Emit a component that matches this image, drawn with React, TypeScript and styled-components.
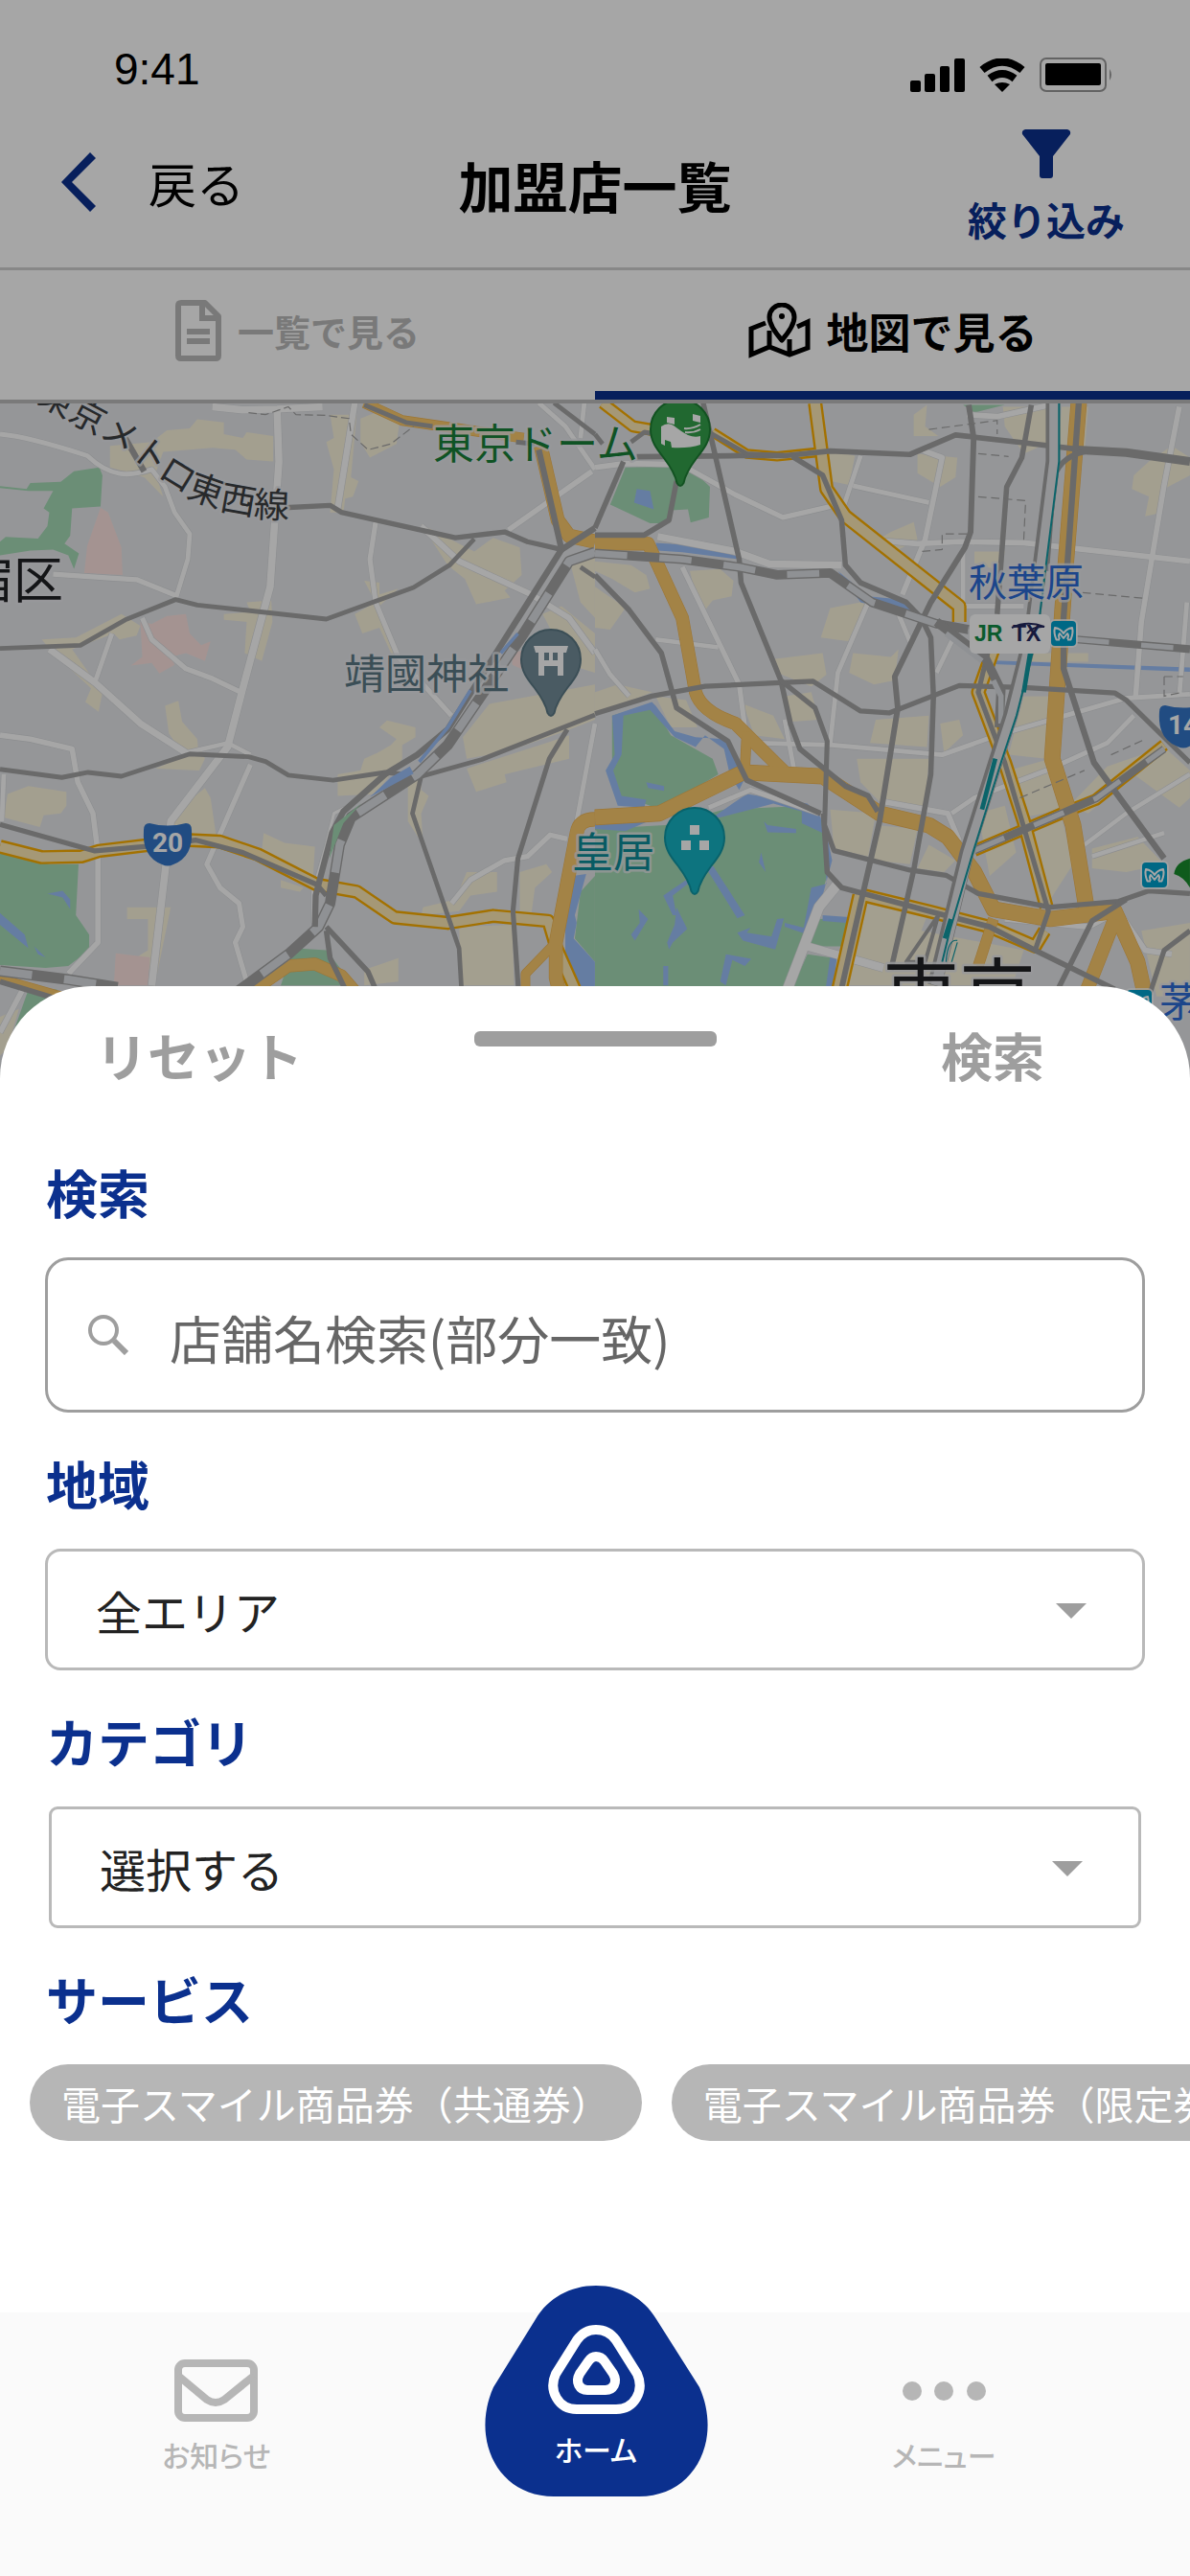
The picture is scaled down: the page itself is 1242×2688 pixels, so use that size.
import React from 'react';
import styled, { createGlobalStyle } from 'styled-components';

const NAVY = '#0b308e';
const JP = '"Noto Sans CJK JP", "Noto Sans", sans-serif';

const GlobalStyle = createGlobalStyle`
  *, *::before, *::after { box-sizing: border-box; }
  body { margin: 0; background: #fff; color: #000; font-family: ${JP}; }
  button, input, select { font-family: inherit; margin: 0; }
  button { border: 0; padding: 0; background: none; color: inherit; cursor: pointer; }
`;

const Screen = styled.div`
  display: flex;
  flex-direction: column;
  min-height: 100vh;
  overflow: hidden;
`;

/* ---------- dimmed page behind the sheet ---------- */

const Backdrop = styled.div`
  position: relative;
`;

const Dim = styled.div`
  position: absolute;
  inset: 0;
  background: rgba(0, 0, 0, 0.35);
`;

const StatusBar = styled.div`
  display: flex;
  justify-content: space-between;
  align-items: center;
  height: 120px;
  padding: 24px 79px 0 119px;
`;

const Clock = styled.time`
  font-family: "Liberation Sans", Arial, sans-serif;
  font-size: 46px;
  line-height: 52px;
`;

const StatusIcons = styled.div`
  display: flex;
  align-items: center;
  gap: 15px;
  padding-top: 12px;
`;

const Header = styled.header`
  display: grid;
  grid-template-columns: 1fr auto 1fr;
  height: 162px;
  border-bottom: 3px solid #cfcfcf;
`;

const BackButton = styled.button`
  display: flex;
  align-items: center;
  gap: 54px;
  height: 140px;
  padding-left: 64px;
  font-size: 50px;
  line-height: 60px;
`;

const Title = styled.h1`
  margin: 0;
  padding-top: 32px;
  font-size: 57px;
  font-weight: 700;
  line-height: 80px;
`;

const FilterButton = styled.button`
  display: flex;
  flex-direction: column;
  align-items: center;
  justify-self: end;
  gap: 14px;
  width: 164px;
  margin-right: 68px;
  padding-top: 15px;
  color: ${NAVY};
  font-size: 41px;
  font-weight: 700;
  line-height: 56px;
  white-space: nowrap;
`;

const Tabs = styled.nav`
  display: grid;
  grid-template-columns: 1fr 1fr;
  height: 139px;
  border-bottom: 4px solid #bcbcbc;
`;

const Tab = styled.button<{ $active?: boolean }>`
  display: flex;
  align-items: center;
  justify-content: center;
  gap: 17px;
  border-bottom: 9px solid ${p => (p.$active ? NAVY : 'transparent')};
  color: ${p => (p.$active ? '#000' : '#bbb')};
  font-size: ${p => (p.$active ? 44 : 38)}px;
  font-weight: 700;
  line-height: 56px;
`;

const MapArt = styled.svg`
  display: block;
  width: 100%;
  height: 704px;
`;

const Label = styled.text<{ $size: number }>`
  font-family: ${JP};
  font-size: ${p => p.$size}px;
  font-weight: 400;
  paint-order: stroke;
  stroke: rgba(232, 234, 238, 0.8);
  stroke-width: 5px;
  stroke-linejoin: round;
`;

const ShieldText = styled.text`
  font-family: Roboto, sans-serif;
  font-size: 28px;
  font-weight: 700;
  fill: #fff;
`;

const LineMark = styled.text`
  font-family: "Liberation Sans", Arial, sans-serif;
  font-size: 23px;
  font-weight: 700;
`;

/* ---------- filter sheet ---------- */

const Sheet = styled.main`
  position: relative;
  flex: 1;
  margin-top: -96px;
  padding: 32px 0 100px;
  border-radius: 96px 96px 0 0;
  background: #fff;
`;

const SheetBar = styled.div`
  display: grid;
  grid-template-columns: 1fr 253px 1fr;
  margin-bottom: 71px;
  padding: 0 152px 0 100px;
`;

const SheetAction = styled.button<{ $end?: boolean }>`
  justify-self: ${p => (p.$end ? 'end' : 'start')};
  color: #9e9e9e;
  font-size: 54px;
  font-weight: 700;
  line-height: 80px;
  white-space: nowrap;
`;

const Handle = styled.span`
  height: 16px;
  margin: 15px -26px 0 26px;
  border-radius: 6px;
  background: #9e9e9e;
`;

const Group = styled.section`
  margin-bottom: 42px;
`;

const groupTitle = `
  display: block;
  margin: 0 48px 36px;
  color: ${NAVY};
  font-size: 54px;
  font-weight: 700;
  line-height: 64px;
`;

const GroupLabel = styled.label`${groupTitle}`;
const GroupHeading = styled.h2`${groupTitle}`;

const SearchBox = styled.div`
  display: flex;
  align-items: center;
  gap: 43px;
  height: 162px;
  margin: 0 47px;
  padding: 0 42px;
  border: 3px solid #9e9e9e;
  border-radius: 24px;
`;

const SearchInput = styled.input`
  flex: 1;
  min-width: 0;
  height: 100px;
  padding: 4px 0 0;
  border: 0;
  outline: 0;
  background: none;
  color: #222;
  font-size: 54px;
  &::placeholder { color: #666; opacity: 1; }
`;

const SelectBox = styled.div<{ $inset?: boolean }>`
  position: relative;
  margin: 0 ${p => (p.$inset ? 51 : 47)}px;
  svg {
    position: absolute;
    right: 61px;
    top: 57px;
    pointer-events: none;
  }
`;

const Select = styled.select<{ $radius: number }>`
  display: block;
  width: 100%;
  height: 127px;
  padding: 0 120px 0 50px;
  appearance: none;
  border: 3px solid #b9b9b9;
  border-radius: ${p => p.$radius}px;
  background: #fff;
  color: #222;
  font-size: 48px;
`;

const Chips = styled.div`
  display: flex;
  gap: 31px;
  padding: 0 31px;
  overflow-x: auto;
  scrollbar-width: none;
`;

const Chip = styled.button`
  flex: none;
  height: 80px;
  padding: 0 33px;
  border-radius: 40px;
  background: #b6b6b6;
  color: #fff;
  font-size: 41px;
  line-height: 80px;
  white-space: nowrap;
`;

/* ---------- bottom navigation ---------- */

const BottomNav = styled.nav`
  position: relative;
  display: grid;
  grid-template-columns: 452fr 340fr 386fr;
  justify-items: center;
  align-items: start;
  height: 275px;
  padding-right: 64px;
  background: #fafafa;
`;

const NavItem = styled.a`
  display: flex;
  flex-direction: column;
  align-items: center;
  gap: 12px;
  padding-top: 49px;
  color: #b6b6b6;
  font-size: 30px;
  font-weight: 500;
  font-feature-settings: "palt";
  line-height: 44px;
  text-decoration: none;
`;

const NavIcon = styled.span`
  display: flex;
  align-items: center;
  height: 65px;
`;

const HomeItem = styled.a`
  position: relative;
  display: flex;
  flex-direction: column;
  align-items: center;
  gap: 14px;
  width: 235px;
  height: 220px;
  margin-top: -28px;
  padding-top: 41px;
  color: #fff;
  font-size: 30px;
  font-weight: 500;
  font-feature-settings: "palt";
  line-height: 44px;
  text-decoration: none;
`;

const HomeShape = styled.svg`
  position: absolute;
  inset: 0;
`;

const HomeMark = styled.svg`
  position: relative;
`;

const HomeText = styled.span`
  position: relative;
`;

/* ---------- map data ---------- */

const C = {
  land: '#e5e7ea',
  block: '#fbf4dc',
  park: '#a5dab5',
  care: '#fce2df',
  water: '#9cc0f9',
  road: '#fff',
  line: '#a3a3a3',
  rail: '#dcdfe3',
  edge: '#fbae00',
  artery: '#fdeab5',
  highway: '#fbc96c',
  teal: '#119aa3',
};

type Stroke = [string, number];

interface Tile {
  blocks: string;
  care: string;
  parks: string;
  water: string;
  roads: Stroke[];
  arteries: Stroke[];
  highways: Stroke[];
  lines: Stroke[];
  rails: Stroke[];
}

const west: Tile = {
  blocks:
    'M290 160L400 150L440 120L500 115L520 92L590 100V130L640 140L650 125L720 135V200L650 195L620 170L560 165L430 175L410 230L430 290L380 240L290 215z M870 80H940L925 240L945 250L930 290L910 295L905 330H870L880 220L860 150L880 140z M950 90L990 75L1055 85L1045 155L975 190L950 150z M1110 360L1250 430L1300 395L1370 420L1375 490L1330 530L1345 548L1255 565L1225 500L1180 465z M650 560L715 555L718 610L690 710L645 690L650 610L590 605V590L660 585z M935 590L990 560L960 505L1000 510V540L1050 525L1000 570L1050 700H1035L1000 625L955 640z M110 655L200 650L320 590L370 620L360 645L315 655L300 640L190 680L270 790L260 840L225 815L240 780L140 690z M435 825L470 812L480 865L520 910L522 930L480 945L445 895z M410 985L530 935L540 960L525 990z M1000 880L1020 862L1095 880V905L1060 925V960L990 1050L890 1055V1000L950 990L960 960L995 945L1030 925L1045 910z M1220 905L1290 820L1568 770V860L1490 890L1340 940L1230 960z M1230 985L1440 920L1500 900V960L1330 1000L1335 1020L1255 1045z M20 1050L75 1030L175 1045V1080L160 1100L115 1105L105 1135L10 1110z M445 1110L540 1035L555 1060L570 1160L460 1150z M695 1150L750 1175L830 1185L825 1265L690 1195z M740 1270L800 1290L790 1300L740 1290z M1075 1020L1110 1010V1040L1130 1055L1110 1100L1115 1180L1075 1120z M1115 1340L1200 1320L1230 1250H1310V1300L1240 1310L1210 1350L1110 1360z M1210 1390L1350 1385L1355 1540H1215z M1370 1250L1440 1230L1455 1250L1410 1290L1400 1360H1370z M335 1340H450L410 1530L395 1500L365 1465L390 1450V1370H335z M960 1500L1050 1470V1530L960 1540z M1500 450L1568 440V600L1530 560z M1430 590L1480 570L1568 640V740L1500 720z M0 1620L50 1600L20 1700L0 1720z',
  care:
    'M265 318L285 330L320 420L323 490L222 485L230 415z M370 610L400 615L440 595L490 590L500 640L530 670L555 660L540 710L490 690L450 700L460 720L420 742L400 715L345 722L375 700z M305 1458L395 1468L390 1540H300z M1350 690L1385 680V735L1350 720z',
  parks:
    'M0 263L70 270L80 255L160 252L195 225L262 215L270 235L265 315L190 320L185 390L170 410L208 435L195 475L180 440L140 425L80 428L0 440V405L15 393L100 397L125 365L130 330L115 320L140 275H75L0 268z M0 1200L130 1230H207L200 1360L235 1410V1450L180 1490L120 1495L0 1488z M780 1445L860 1450L900 1500L920 1540H740L760 1480z M1568 1260L1530 1300L1515 1420L1568 1480z M75 1550H150V1580L35 1660z',
  water:
    'M125 1305L165 1298L185 1320V1345L165 1315z M0 1355L65 1410L75 1445L0 1385z M90 1440L120 1468L100 1460z M1510 1260L1545 1255L1515 1360L1520 1380L1512 1420L1568 1480V1568H1530L1490 1480V1380z',
  roads: [
    ['M0 130C60 135 150 160 230 185C290 240 340 240 400 220L435 265L460 330L500 385L495 450L465 545', 12],
    ['M730 60L735 200L712 520L640 780L600 930L450 1120L435 1250L400 1540', 19],
    ['M560 60L640 68L730 66L850 60', 18],
    ['M935 50L890 320', 16],
    ['M990 355L975 450L990 560L1050 700L1190 850', 13],
    ['M140 488L290 498L360 502L470 545', 13],
    ['M375 600L400 655L490 730L560 755L635 790', 13],
    ['M130 680L250 765L370 870L490 945', 17],
    ['M295 640L250 765', 12],
    ['M0 900L80 910L190 935L205 1020L245 1100L258 1200V1430L180 1510', 14],
    ['M490 945L600 920L660 950', 11],
    ['M660 975L545 1230L580 1290L630 1330L640 1390L620 1430L650 1530', 13],
    ['M1110 365L1210 455L1400 540L1500 600L1568 690', 15],
    ['M1340 375L1560 225', 14],
    ['M1568 870L1520 1120', 12],
    ['M1495 1165L1450 1155L1390 1210L1330 1220L1240 1270L1190 1330', 13],
    ['M1420 50L1490 110L1568 220', 12],
    ['M1540 50L1530 140', 12],
    ['M10 1000L5 1120', 12],
    ['M910 1085L880 1100L860 1180L825 1300V1380', 8],
    ['M60 1550L0 1660', 14],
  ],
  arteries: [
    ['M0 1185L110 1212L215 1210L260 1196L500 1168L580 1172L680 1205L835 1282L940 1300L1040 1366L1180 1380L1300 1362L1445 1375L1465 1440L1520 1560', 36],
  ],
  highways: [
    ['M1568 1115Q1525 1115 1520 1150L1465 1430V1520L1475 1560', 34],
    ['M1465 1430L1385 1510V1560', 22],
    ['M670 1550L760 1490L830 1485L900 1515L940 1560', 30],
    ['M960 50L1060 95L1380 140', 24],
    ['M1425 160L1470 350L1500 390L1568 405', 34],
    ['M0 1520L180 1570', 16],
  ],
  lines: [
    ['M750 318L870 312L900 330L1200 395L1330 380L1390 405L1480 425', 13],
    ['M0 678L212 670L330 605L463 553L520 567L860 603L1090 522L1185 465L1250 398', 12],
    ['M0 987L163 1008L232 995L320 1005L500 948L655 955L700 967L760 1002L878 1015L1015 995L1110 1005L1270 962L1568 848', 12],
    ['M1110 1005L1087 1100L1210 1445L1217 1560', 12],
    ['M1495 885L1448 960L1365 1215L1352 1350L1367 1560', 13],
    ['M0 1128L250 1196L440 1180L515 1168L640 1200L835 1282L860 1310', 13],
    ['M1420 170L1480 425L1568 370', 16],
    ['M960 55L1070 100L1140 110', 12],
    ['M1460 50L1568 130', 12],
    ['M1360 150L1410 155', 12],
    ['M860 1390L970 1505L990 1550', 14],
    ['M860 1400L870 1470L910 1550', 14],
    ['M330 140L380 225', 16],
    ['M1530 470L1568 495', 12],
    ['M0 1530L170 1580', 14],
  ],
  rails: [
    ['M1568 432L1500 455L1380 640L1180 925L1100 1000L925 1110L895 1180L870 1330L840 1390L760 1460L620 1560', 28],
    ['M0 1503L180 1525L310 1545', 28],
  ],
};

const east: Tile = {
  blocks:
    'M0 520L60 560L80 575L40 630L0 625z M0 455L95 465L135 490L145 525L105 535L45 500L0 480z M250 480L330 475L365 505L360 545L310 555L290 580L260 520z M0 790L60 770L150 790L100 810L0 845z M470 705L600 690L610 745L570 775L480 740z M620 575L700 560L720 570L670 660L595 650z M680 690L780 700L800 680L790 760L735 770L670 740z M840 80L875 55L870 110L905 135H840z M850 180L955 190L950 240L910 265L850 230z M610 170L685 185L670 260L620 250z M780 380L840 355L850 400L790 430L745 400z M1000 430H1080L1070 480L1000 460z M1075 60H1190L1200 150L1130 180L1080 110z M1230 60H1300L1290 180L1220 170z M1460 200L1520 160L1568 190V235L1500 270L1495 330L1450 340L1460 290L1415 270L1420 235z M500 800L570 790L590 860L520 865z M740 860L880 850L875 930L725 920z M910 870L960 860L970 900L920 945z M690 960H880L870 1090L760 1080L700 1020z M620 1090L740 1100L720 1210L630 1190z M740 1130L850 1140L830 1230L735 1220z M880 1180L950 1220L920 1250L850 1240z M1090 990L1200 960L1230 1090L1130 1110z M1350 980L1500 930L1568 990V1060L1540 1085L1420 1000L1300 1100L1250 1080z M1130 1130L1230 1110L1260 1230L1200 1320z M1310 1190L1430 1160L1500 1230L1400 1250L1310 1240z M720 1320L880 1350L860 1400L1130 1450L1100 1540H660z M1130 800H1200L1190 960L1090 950z M1440 1400L1568 1380V1568H1480z M1120 690H1300V712H1120z M390 820L470 850L500 910L420 900z M160 800L240 810L270 880L200 880z M1010 1100L1080 1080L1110 1200L1040 1260z',
  care: '',
  parks:
    'M80 215L190 212L250 215L303 265L300 343L252 356L245 322L200 325L190 358H145L40 310z M45 850L150 820L200 900L310 960L325 1000L170 1090L130 1075L60 1060L45 990z M0 1140L185 1130L340 1090L560 1080L600 1120L620 1230L600 1300L500 1568H0z M590 1370L670 1365L650 1440H565z M560 1460L630 1470L615 1568H510z M970 55H1080L1000 75z',
  water:
    'M45 850L150 815L160 825L210 890L265 905L340 910L370 950L400 1000L380 1040L355 1000L340 935L290 900L265 930L210 905L145 835L75 850L70 950L48 990L70 1055L135 1065L130 1085L60 1080L28 990L52 950z M160 408L220 412L365 430L380 450L230 432L165 428z M640 480L720 545L800 552L900 620L870 600L780 575L700 560z M110 270L145 275L155 322L103 305z M310 1110L400 1050L560 1075L595 1110L600 1150L545 1125V1095L470 1075L430 1085L330 1110z M445 1120L455 1130L530 1140V1150L455 1148z M135 1020L182 1030V1042L140 1035z M605 1130L625 1220L600 1310L560 1410L500 1390V1380L550 1392L570 1290L610 1280z M375 1405L410 1392L400 1405L465 1415L480 1370L498 1368L475 1448L390 1425z M115 1345L140 1370L105 1425L95 1410L118 1380z M438 1200L450 1250L432 1225z M600 1360L670 1365L660 1380L600 1375z M0 1120L140 1120L80 1145L0 1140z M290 1235H312L395 1360L375 1368z M215 1340L243 1395L205 1430L195 1448L190 1430L210 1385z M1050 709L1568 727V738L1050 718z M620 1465H638L625 1568H605z M345 1460L412 1472L395 1490L362 1475L345 1540L330 1530z M180 1490H193V1540H180z M180 1310L240 1270L245 1280L205 1310L215 1360L205 1360z',
  roads: [
    ['M250 220L370 285L495 343L620 315', 13],
    ['M700 185L650 330', 12],
    ['M680 262L880 305', 12],
    ['M865 172L915 190L870 400L810 540', 14],
    ['M720 400L850 410L960 405L1130 408L1568 455', 14],
    ['M1540 60L1500 260L1440 610L1425 800', 14],
    ['M980 80L1060 85L1200 55', 14],
    ['M230 470L380 770L395 880', 13],
    ['M160 655L325 675', 11],
    ['M0 680L40 745L90 800', 12],
    ['M165 392L370 430L460 462L650 465', 18],
    ['M720 560L640 740L620 920', 12],
    ['M430 920L625 925L915 950L1060 900L1400 805L1568 795', 12],
    ['M500 860L525 990', 12],
    ['M970 430V570H1130', 12],
    ['M800 590L830 660', 12],
    ['M960 620L900 740', 12],
    ['M940 1100L1000 1060L1190 990L1350 920L1420 850', 12],
    ['M760 1070L930 1100L960 1170', 14],
    ['M1290 1180L1400 1100L1568 1000', 11],
    ['M1310 1210L1500 1150', 11],
    ['M500 1568L590 1340L640 1280', 26],
    ['M560 1440L760 1495', 20],
    ['M1080 1370L1300 1390L1380 1350L1450 1450L1520 1460', 14],
    ['M0 215L80 205L240 208', 14],
    ['M1560 560L1540 800', 12],
    ['M300 1085L410 1040L590 1100', 12],
  ],
  arteries: [
    ['M580 50L610 270L660 340L960 570V610', 38],
    ['M20 50L100 110L160 120', 32],
    ['M310 125L400 180L480 187L600 175', 26],
    ['M1050 680L1010 790L1080 970L1130 1120L1190 1340', 38],
    ['M700 1310L640 1568', 44],
    ['M710 1310L880 1350L1040 1390L1160 1440L1185 1400', 36],
    ['M1000 1195L1230 1100L1320 1065L1500 925', 32],
  ],
  highways: [
    ['M0 410H140L230 600L265 790Q280 840 370 870L500 995', 32],
    ['M0 1110L170 1100L390 995L600 1005L750 1100L880 1130L930 1160L1000 1250L1050 1345L1200 1370L1370 1350L1430 1480L1450 1568', 38],
    ['M400 890L395 990', 24],
    ['M1275 50L1240 470L1205 960L1260 1130L1295 1340', 40],
    ['M1370 1370L1290 1568', 34],
    ['M1050 1370L1010 1490', 26],
  ],
  lines: [
    ['M0 130L20 155', 12],
    ['M110 188L380 185L500 185L620 173L830 182L950 132L1130 152L1270 168', 14],
    ['M1270 170L1400 177L1568 200', 22],
    ['M75 200L0 370', 14],
    ['M95 150L130 125L150 128', 12],
    ['M215 250L195 350L130 388H0', 14],
    ['M285 50L380 450L385 510L490 760L515 870L540 935L660 1030L720 1055L745 1095', 14],
    ['M305 128L400 180L500 185', 12],
    ['M0 490L90 580L175 690L215 830L350 915L400 1015L595 1100', 14],
    ['M0 845L150 800L290 775L500 765L575 762L700 838L775 843L960 773L1130 778L1370 792L1400 810L1568 970', 13],
    ['M490 760L580 830L612 915L605 1130L630 1195L830 1245L925 1258L1010 1305L1200 1340L1380 1325L1460 1298L1568 1305', 13],
    ['M602 1100L612 1250L650 1290L880 1350L1040 1390L1160 1450L1370 1550', 14],
    ['M520 187L600 235L650 350L660 465L700 510L820 560L860 600L885 650L892 800L885 1000L840 1245L780 1500', 14],
    ['M985 55L998 140L990 380L975 420L885 560L855 620L790 750L798 830L750 1120L705 1310L645 1568', 15],
    ['M1150 55L1125 190L1085 265L1060 590', 14],
    ['M1275 50L1235 600V730L1315 970L1500 1215', 16],
    ['M1190 480L1210 240Q1230 180 1310 172', 14],
    ['M1035 690L1010 790L1080 970L1195 1350L1160 1450', 13],
    ['M1568 1400L1500 1450L1460 1568', 13],
    ['M1400 1320L1310 1375L1220 1550', 14],
    ['M905 1360L820 1480H870z', 10],
  ],
  rails: [
    ['M0 435L230 450L380 470L480 490L620 485L730 560L900 615L985 630', 24],
    ['M1270 655L1568 680', 20],
    ['M1000 1195L1230 1100L1320 1062L1500 935', 20],
  ],
};

const Strokes = ({ items, color, grow = 0, dash }: { items: Stroke[]; color: string; grow?: number; dash?: string }) => (
  <g fill="none" stroke={color} strokeLinejoin="round" strokeDasharray={dash}>
    {items.map(([d, w]) => (
      <path key={d} d={d} strokeWidth={w + grow} />
    ))}
  </g>
);

const MapTile = ({ tile }: { tile: Tile }) => (
  <>
    <path d={tile.blocks} fill={C.block} />
    <path d={tile.care} fill={C.care} />
    <path d={tile.parks} fill={C.park} />
    <path d={tile.water} fill={C.water} />
    <Strokes items={tile.roads} color="#d8dadd" grow={3} />
    <Strokes items={tile.roads} color={C.road} />
    <Strokes items={tile.arteries} color={C.edge} />
    <Strokes items={tile.arteries} color={C.artery} grow={-12} />
    <Strokes items={tile.highways} color="#f0b552" grow={3} />
    <Strokes items={tile.highways} color={C.highway} />
    <Strokes items={tile.lines} color={C.line} />
    <Strokes items={tile.rails} color={C.line} />
    <Strokes items={tile.rails} color={C.rail} grow={-7} dash="85 85" />
  </>
);

const Pin = ({ x, y, color, edge, children }: { x: number; y: number; color: string; edge: string; children?: React.ReactNode }) => (
  <g transform={`translate(${x} ${y})`}>
    <path
      d="M-31 0a31 31 0 0 1 62 0c0 12-6 20-14 30c-9 12-12 18-13.500 26q-3.500 6-7 0c-1.500-8-4.500-14-13.500-26c-8-10-14-18-14-30z"
      fill={color}
      stroke={edge}
      strokeWidth="2"
    />
    {children}
  </g>
);

const Shield = ({ x, y, label }: { x: number; y: number; label: string }) => (
  <g transform={`translate(${x} ${y})`}>
    <path d="M-19-21Q0-16 19-21Q25-21 25-14Q27 14 6 22Q0 25-6 22Q-27 14-25-14Q-25-21-19-21z" fill="#3476c8" />
    <ShieldText textAnchor="middle" y="9">{label}</ShieldText>
  </g>
);

const MetroBadge = ({ x, y }: { x: number; y: number }) => (
  <g transform={`translate(${x} ${y})`}>
    <rect x="-2" y="-2" width="30" height="30" rx="6" fill="#fff" opacity=".7" />
    <rect width="26" height="26" rx="4" fill="#00a0cc" />
    <path d="M9 19.500H5.500Q2.500 12 4 7Q10 8 13 13Q16 8 22 7Q23.500 12 20.500 19.500H17M9 19Q7 15 9 13L13 18L17 13Q19 15 17 19" fill="none" stroke="#fff" strokeWidth="2" strokeLinejoin="round" />
  </g>
);

const TokyoMap = () => (
  <MapArt viewBox="0 0 1242 704" preserveAspectRatio="xMidYMin slice" role="img" aria-label="東京周辺の地図">
    <rect width="1242" height="704" fill={C.land} />
    <g transform="matrix(.396 0 0 .408 0 -21)">
      <MapTile tile={west} />
      <g fill="none">
        <path d="M1480 425L1180 885L1100 950L1015 1000L905 1095L875 1150L832 1310L830 1390" stroke={C.line} strokeWidth="16" />
        <path d="M1365 640L1320 690M1240 785L1180 880L1105 968" stroke={C.water} strokeWidth="9" />
        <path d="M655 75L700 80L760 60L780 80L860 82L920 90L925 130L970 170L1030 155L1090 110" stroke={C.line} strokeWidth="3" strokeDasharray="22 10" />
      </g>
      <path d="M975 1058L1030 1008L1080 980L1090 998z" fill={C.water} />
      <path d="M952 1075L905 1125L868 1215L880 1130z" fill={C.park} />
    </g>
    <g transform="matrix(.396 0 0 .408 621 -21)">
      <MapTile tile={east} />
      <g fill="none">
        <path d="M900 610L1030 705L1070 785L1065 880" stroke={C.line} strokeWidth="24" />
        <path d="M925 640L1020 710M1050 760L1070 800V870" stroke={C.rail} strokeWidth="14" />
        <path d="M1207 50V200L1150 640L1095 850L1055 970L980 1200L895 1540" stroke={C.line} strokeWidth="38" />
        <path d="M1211 50V200L1154 640L1099 850L1059 970L984 1200L899 1540" stroke="#e3e5e9" strokeWidth="27" />
        <path d="M1223 50V200L1166 640L1111 850L1070 970L996 1200L935 1400L915 1480" stroke={C.teal} strokeWidth="5" />
        <path d="M1147 690L1130 790M1055 960L1020 1090M938 1370L922 1420" stroke={C.teal} strokeWidth="12" />
        <path d="M955 1425Q930 1420 925 1480M955 1430L940 1480" stroke={C.teal} strokeWidth="3" />
        <path d="M880 118L1060 95V130M1010 180L1090 187M1010 290L1135 300L1130 400M980 385H915V425L860 430M1285 535L1450 550M1500 750H1550M1500 750V800L1550 790M1120 1060L1290 990M1360 950L1450 910" stroke={C.line} strokeWidth="3" strokeDasharray="22 12" />
      </g>
      <path d="M1568 1215Q1530 1225 1526 1255Q1552 1262 1568 1290z" fill="#188c2c" />
    </g>

    <path id="tozai-line" d="M34-4L84 24L112 39L140 57L168 79L202 100L236 112L275 119L320 121" fill="none" />
    <Label $size={37} fill="#3c4043">
      <textPath href="#tozai-line" startOffset="4">東京メトロ東西線</textPath>
    </Label>
    <Label $size={43} x="452" y="58" fill="#188038">東京ドーム</Label>
    <Label $size={43} x="359" y="298" fill="#5b7985">靖國神社</Label>
    <Label $size={43} x="597" y="484" fill="#0c8c98">皇居</Label>
    <Label $size={40} x="1011" y="201" fill="#2b6bd6">秋葉原</Label>
    <Label $size={52} x="-38" y="203" fill="#202124">宿区</Label>
    <Label $size={80} x="921" y="645" fill="#202124">東京</Label>
    <Label $size={42} x="1210" y="640" fill="#2b6bd6">茅</Label>

    <Pin x={710} y={27} color="#34a04a" edge="#1c7f34">
      <path d="M-20-3Q-13-8-7-4Q2 3 8 6Q15 9 21 7V16Q9 20-9 19L-10 13L-16 11V17L-20 15z" fill="#fff" />
      <path d="M-14-13L-6-12V-5L-14-7zM13-16L21-14V-7L13-9z" fill="#fff" />
      <path d="M4-1Q12 0 21-5M5 3Q14 4 21 0" fill="none" stroke="#fff" strokeWidth="2" />
    </Pin>
    <Pin x={575} y={267} color="#728c98" edge="#5b7985">
      <path d="M-18-14H18L16-7H13V17H7V7H-7V17H-13V-7H-16zM-7-7V1H7V-7zM-2-7H2V1H-2z" fill="#fff" fillRule="evenodd" />
    </Pin>
    <Pin x={725} y={453} color="#14b3c4" edge="#0f97a5">
      <path d="M-5-13H5V-3H-5zM-14 3H-4V13H-14zM5 3H15V13H5z" fill="#fff" />
    </Pin>

    <Shield x={175} y={459} label="20" />
    <Shield x={1235} y={336} label="14" />

    <rect x="1012" y="220" width="84" height="41" rx="6" fill="#fff" />
    <LineMark x="1017" y="248" fill="#118c46">JR</LineMark>
    <LineMark x="1057" y="248" fill="#24295e">TX</LineMark>
    <path d="M1056 234Q1072 226 1090 233Q1078 232 1072 240" fill="none" stroke="#24295e" strokeWidth="2" />
    <MetroBadge x={1097} y={227} />
    <MetroBadge x={1192} y={479} />
    <MetroBadge x={1176} y={612} />
  </MapArt>
);

/* ---------- icons ---------- */

const SignalIcon = () => (
  <svg width="57" height="35" viewBox="0 0 57 35" aria-hidden="true">
    <rect x="0" y="23" width="11" height="12" rx="2" />
    <rect x="15" y="16" width="11" height="19" rx="2" />
    <rect x="31" y="8" width="10" height="27" rx="2" />
    <rect x="46" y="0" width="11" height="35" rx="2" />
  </svg>
);

const WifiIcon = () => (
  <svg width="48" height="35" viewBox="0 0 48 35" fill="none" stroke="#000" strokeWidth="8" aria-hidden="true">
    <path d="M3 12Q24-5 45 12" />
    <path d="M11 21Q24 11 37 21" />
    <path d="M24 35L16 27Q24 23 32 27z" fill="#000" stroke="none" />
  </svg>
);

const BatteryIcon = () => (
  <svg width="78" height="36" viewBox="0 0 78 36" aria-hidden="true">
    <rect x="1" y="1" width="68" height="34" rx="6" fill="none" stroke="#999" strokeWidth="2" />
    <rect x="6" y="6" width="58" height="23" rx="2" />
    <path d="M73 12q4 6 0 12z" fill="#999" />
  </svg>
);

const BackIcon = () => (
  <svg width="37" height="62" viewBox="0 0 37 62" fill={NAVY} aria-hidden="true">
    <path d="M30 0L36 6L11 31L36 56L30 62L0 31z" />
  </svg>
);

const FunnelIcon = () => (
  <svg width="52" height="51" viewBox="0 0 52 51" fill={NAVY} aria-hidden="true">
    <path d="M4 0H48Q52 1 51 5L33 28V48Q33 51 30 51H22Q19 51 19 48V28L1 5Q0 1 4 0z" />
  </svg>
);

const DocumentIcon = () => (
  <svg width="48" height="64" viewBox="0 0 48 64" fill="none" stroke="#bbb" strokeWidth="6" aria-hidden="true">
    <path d="M6 3H31L45 17V58Q45 61 42 61H6Q3 61 3 58V6Q3 3 6 3z" strokeLinejoin="round" />
    <path d="M28 3V19H45M12 33H36M12 43H36" />
  </svg>
);

const MapPinIcon = () => (
  <svg width="65" height="58" viewBox="0 0 65 58" fill="none" stroke="#000" strokeWidth="5" aria-hidden="true">
    <path d="M35 39Q22 24 22 15A13 13 0 0 1 48 15Q48 24 35 39z" strokeLinejoin="round" />
    <path d="M18 21L3 27V54L22 46L43 54L62 47V20L51 25M22 29V46M43 38V54" />
    <circle cx="35" cy="14" r="3" fill="#000" stroke="none" />
  </svg>
);

const SearchIcon = () => (
  <svg width="42" height="42" viewBox="0 0 42 42" fill="none" stroke="#9e9e9e" strokeWidth="4" aria-hidden="true">
    <circle cx="16" cy="16" r="14" />
    <path d="M27 27L40 40" strokeWidth="6" />
  </svg>
);

const ArrowIcon = () => (
  <svg width="32" height="17" viewBox="0 0 32 17" fill="#9e9e9e" aria-hidden="true">
    <path d="M0 0H32L16 16z" />
  </svg>
);

const MailIcon = () => (
  <svg width="87" height="65" viewBox="0 0 87 65" fill="none" stroke="#b6b6b6" strokeWidth="8" aria-hidden="true">
    <rect x="4" y="4" width="79" height="57" rx="7" />
    <path d="M4 17L34 42Q43 48 52 42L83 17" />
  </svg>
);

const DotsIcon = () => (
  <svg width="87" height="20" viewBox="0 0 87 20" fill="#b6b6b6" aria-hidden="true">
    <circle cx="10" cy="10" r="10" />
    <circle cx="43" cy="10" r="10" />
    <circle cx="77" cy="10" r="10" />
  </svg>
);

export default function App() {
  return (
    <Screen>
      <GlobalStyle />
      <Backdrop>
        <StatusBar>
          <Clock>9:41</Clock>
          <StatusIcons>
            <SignalIcon />
            <WifiIcon />
            <BatteryIcon />
          </StatusIcons>
        </StatusBar>
        <Header>
          <BackButton type="button"><BackIcon />戻る</BackButton>
          <Title>加盟店一覧</Title>
          <FilterButton type="button"><FunnelIcon />絞り込み</FilterButton>
        </Header>
        <Tabs>
          <Tab type="button"><DocumentIcon />一覧で見る</Tab>
          <Tab type="button" $active><MapPinIcon />地図で見る</Tab>
        </Tabs>
        <TokyoMap />
        <Dim />
      </Backdrop>

      <Sheet>
        <SheetBar>
          <SheetAction type="button">リセット</SheetAction>
          <Handle />
          <SheetAction type="submit" $end>検索</SheetAction>
        </SheetBar>

        <Group>
          <GroupLabel htmlFor="keyword">検索</GroupLabel>
          <SearchBox>
            <SearchIcon />
            <SearchInput id="keyword" type="text" placeholder="店舗名検索(部分一致)" />
          </SearchBox>
        </Group>

        <Group>
          <GroupLabel htmlFor="area">地域</GroupLabel>
          <SelectBox>
            <Select id="area" $radius={16} defaultValue="all">
              <option value="all">全エリア</option>
            </Select>
            <ArrowIcon />
          </SelectBox>
        </Group>

        <Group>
          <GroupLabel htmlFor="category">カテゴリ</GroupLabel>
          <SelectBox $inset>
            <Select id="category" $radius={9} defaultValue="none">
              <option value="none">選択する</option>
            </Select>
            <ArrowIcon />
          </SelectBox>
        </Group>

        <Group>
          <GroupHeading>サービス</GroupHeading>
          <Chips>
            <Chip type="button">電子スマイル商品券（共通券）</Chip>
            <Chip type="button">電子スマイル商品券（限定券）</Chip>
          </Chips>
        </Group>
      </Sheet>

      <BottomNav>
        <NavItem href="#news">
          <NavIcon><MailIcon /></NavIcon>
          お知らせ
        </NavItem>
        <HomeItem href="#home">
          <HomeShape width="235" height="220" viewBox="0 0 235 220" fill={NAVY} aria-hidden="true">
            <path d="M117 0C90 0 67 13 54 35L10 106C-14 160 14 220 73 220H162C221 220 249 160 225 106L180 35C167 13 144 0 117 0z" />
          </HomeShape>
          <HomeMark width="101" height="93" viewBox="0 0 101 93" fill="none" stroke="#fff" strokeWidth="10" aria-hidden="true">
            <path d="M50 5C41 5 35 9 30 16L8 51C0 69 11 88 30 88H71C90 88 101 69 93 51L71 16C66 9 60 5 50 5z" />
            <path d="M50 33C46 33 44 35 42 38L33 51C28 60 33 68 41 68H60C68 68 73 60 68 51L59 38C57 35 55 33 50 33z" />
          </HomeMark>
          <HomeText>ホーム</HomeText>
        </HomeItem>
        <NavItem href="#menu">
          <NavIcon><DotsIcon /></NavIcon>
          メニュー
        </NavItem>
      </BottomNav>
    </Screen>
  );
}
